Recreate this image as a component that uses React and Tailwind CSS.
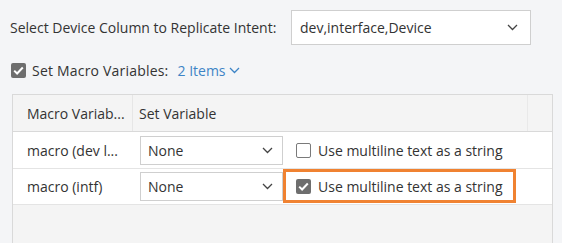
import React from "react";

function Chevron({ className = "" }) {
  return (
    <svg className={className} width="11" height="7" viewBox="0 0 11 7" fill="none">
      <path d="M1 1l4.5 4.5L10 1" stroke="currentColor" strokeWidth="1.3" />
    </svg>
  );
}

function CheckBox({ checked }) {
  if (checked) {
    return (
      <span className="flex h-[15px] w-[15px] shrink-0 items-center justify-center rounded-[2px] bg-[#6e6e6e]">
        <svg width="11" height="9" viewBox="0 0 11 9" fill="none">
          <path d="M1.2 4.6l2.9 2.9L9.8 1.5" stroke="#fff" strokeWidth="2" />
        </svg>
      </span>
    );
  }
  return <span className="block h-[15px] w-[15px] shrink-0 rounded-[2px] border border-[#7a7a7a] bg-white" />;
}

function Select({ value }) {
  return (
    <div className="flex h-[29px] w-[143px] items-center justify-between border border-[#cfcfcf] bg-white pl-[7px] pr-[9px] text-[#333]">
      <span>{value}</span>
      <Chevron className="text-[#444]" />
    </div>
  );
}

export default function App() {
  const rows = [
    { name: "macro (dev l...", checked: false, h: "h-[37px]" },
    { name: "macro (intf)", checked: true, h: "h-[36px]" },
  ];
  return (
    <div
      className="h-[243px] w-[562px] overflow-hidden bg-[#f4f5f7] text-[14px] text-[#333]"
      style={{ fontFamily: '"Open Sans", "Liberation Sans", sans-serif' }}
    >
      <div className="flex items-center pl-[10px] pt-[10px]">
        <span className="w-[281px]">Select Device Column to Replicate Intent:</span>
        <div className="flex h-[35px] w-[240px] items-center justify-between border border-[#cfcfcf] bg-white pl-[8px] pr-[12px]">
          <span>dev,interface,Device</span>
          <Chevron className="text-[#444]" />
        </div>
      </div>

      <div className="mt-[16px] flex h-[19px] items-center pl-[11px]">
        <CheckBox checked />
        <span className="ml-[6px] tracking-[0.2px]">Set Macro Variables:</span>
        <span className="ml-[9px] text-[#3d84c6]">2 Items</span>
        <Chevron className="ml-[3px] text-[#3d84c6]" />
      </div>

      <div className="ml-[12px] mt-[14px] h-[200px] w-[541px] border border-[#d9d9d9] bg-[#f4f4f4]">
        <div className="flex h-[37px] border-b border-[#d9d9d9]">
          <div className="flex w-[120px] items-center border-r border-[#e6e6e6] pl-[14px]">Macro Variab...</div>
          <div className="flex w-[395px] items-center border-r border-[#e9e9e9] pl-[6px]">Set Variable</div>
          <div className="flex-1" />
        </div>
        {rows.map((r, i) => (
          <div key={i} className={`relative flex ${r.h} items-center border-b border-[#e4e4e4] bg-white`}>
            <div className="w-[120px] pl-[14px]">{r.name}</div>
            <div className="pl-[7px]">
              <Select value="None" />
            </div>
            <div className="ml-[13px] flex items-center">
              <CheckBox checked={r.checked} />
              <span className="ml-[7px]">Use multiline text as a string</span>
            </div>
            {r.checked && (
              <div className="absolute left-[270px] top-0 h-[34px] w-[233px] border-[3px] border-[#f08231]" />
            )}
          </div>
        ))}
      </div>
    </div>
  );
}
